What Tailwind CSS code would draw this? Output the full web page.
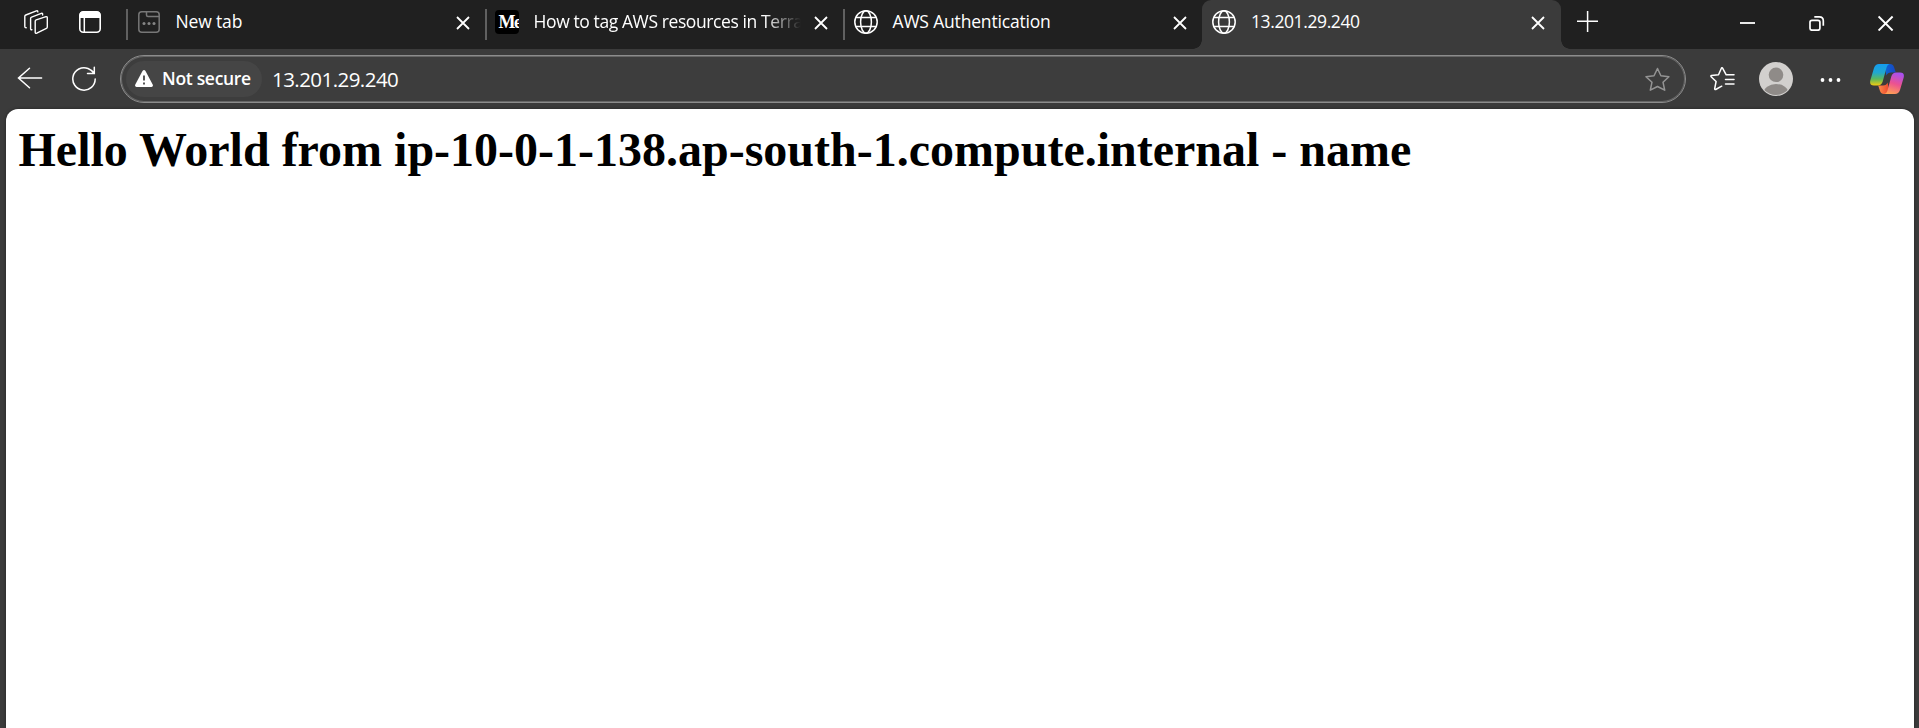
<!DOCTYPE html>
<html lang="en">
<head>
<meta charset="utf-8">
<title>13.201.29.240</title>
<script src="https://cdn.jsdelivr.net/npm/@tailwindcss/browser@4"></script>
</head>
<body class="h-screen overflow-hidden bg-[#3b3b3b] font-['Open_Sans','Noto_Sans',sans-serif] text-white">
<svg class="hidden">
  <symbol id="x" viewBox="0 0 14 14"><path d="M1 1l12 12M13 1L1 13" fill="none" stroke="#fff" stroke-width="1.8"/></symbol>
  <symbol id="globe" viewBox="0 0 24 24"><g fill="none" stroke="#fff" stroke-width="1.5"><circle cx="12" cy="12" r="11.2"/><ellipse cx="12" cy="12" rx="5.4" ry="11.2"/><path d="M1.8 7.5h20.4M1.8 16.5h20.4"/></g></symbol>
</svg>
<div class="flex h-screen flex-col">
  <div class="flex h-[49px] shrink-0 bg-[#202020]">
    <div class="flex w-[126px] shrink-0 items-start gap-[31px] pl-6 pt-[10px]">
      <svg class="h-6 w-6 shrink-0" viewBox="0 0 24 24" fill="none" stroke="#fff" stroke-width="1.4" stroke-linejoin="round" stroke-linecap="round">
        <path d="M12.2 9.8L22 6.7q1.3-.3 1.3 1V17q0 1-.9 1.4l-9.600 4.800q-1.600.5-1.600-1v-11q0-1 1-1.400z"/>
        <path d="M18.6 5V4.300q0-1.300-1.300-.900L7.600 7.100q-1 .4-1 1.400v10.300q0 1.200 1.300.9"/>
        <path d="M13.8 1.900q0-1.500-1.400-1L1.800 5q-1 .4-1 1.400v10.100q0 1.200 1.400 1.200"/>
      </svg>
      <svg class="mt-px h-[22px] w-[22px] shrink-0" viewBox="0 0 22 22"><rect x=".8" y=".8" width="20.400" height="20.400" rx="3.500" fill="none" stroke="#fff" stroke-width="1.600"/><path d="M.5 7V4Q.5.5 4 .5h14q3.500 0 3.500 3.500v3z" fill="#fff"/><path d="M5.300 6v15" stroke="#fff" stroke-width="1.500"/></svg>
    </div>
    <div class="flex w-[359px] shrink-0 items-start">
      <i class="mt-[9px] h-[31px] w-[1.500px] bg-[#606060]"></i>
      <svg class="ml-[10.500px] mt-[11px] h-[22px] w-[22px]" viewBox="0 0 22 22" fill="none" stroke="#777" stroke-width="1.500"><rect x=".8" y=".8" width="20.400" height="20.400" rx="3"/><path d="M8.500 1v3q0 1.500 1.500 1.500h11"/><g fill="#858585" stroke="none"><circle cx="6" cy="12.500" r="1.500"/><circle cx="11" cy="12.500" r="1.500"/><circle cx="16" cy="12.500" r="1.500"/></g></svg>
      <span class="ml-[15.500px] mt-[9px] w-[270px] whitespace-nowrap text-[17.500px] leading-6 tracking-[-0.150px]">New tab</span>
      <svg class="ml-[10px] mt-4 h-[14px] w-[14px]"><use href="#x"/></svg>
    </div>
    <div class="flex w-[358px] shrink-0 items-start">
      <i class="mt-[9px] h-[31px] w-[1.500px] bg-[#606060]"></i>
      <span class="ml-2 mt-[10px] flex h-6 w-6 shrink-0 overflow-hidden rounded bg-black pl-1 font-['Liberation_Serif',serif] text-[18px] font-bold leading-6 tracking-[-1.500px]">Me</span>
      <span class="ml-[15px] mt-[9px] w-[267px] overflow-hidden whitespace-nowrap text-[17.500px] leading-6 tracking-[-0.400px] [mask-image:linear-gradient(to_right,#000_230px,transparent_267px)]">How to tag AWS resources in Terraform</span>
      <svg class="ml-[13px] mt-4 h-[14px] w-[14px]"><use href="#x"/></svg>
    </div>
    <div class="flex w-[359px] shrink-0 items-start">
      <i class="mt-[9px] h-[31px] w-[1.500px] bg-[#606060]"></i>
      <svg class="ml-[9px] mt-[10px] h-6 w-6"><use href="#globe"/></svg>
      <span class="ml-[15px] mt-[9px] w-[270px] whitespace-nowrap text-[17.500px] leading-6 tracking-[-0.180px]">AWS Authentication</span>
      <svg class="ml-[10px] mt-4 h-[14px] w-[14px]"><use href="#x"/></svg>
    </div>
    <div class="relative flex w-[359px] shrink-0 items-start rounded-t-[9px] bg-[#3b3b3b]">
      <i class="absolute -left-[9px] bottom-0 h-[9px] w-[9px] bg-[radial-gradient(circle_at_0_0,transparent_8.500px,#3b3b3b_9px)]"></i>
      <i class="absolute -right-[9px] bottom-0 h-[9px] w-[9px] bg-[radial-gradient(circle_at_100%_0,transparent_8.500px,#3b3b3b_9px)]"></i>
      <svg class="ml-[10px] mt-[10px] h-6 w-6"><use href="#globe"/></svg>
      <span class="ml-[15px] mt-[9px] w-[270px] whitespace-nowrap text-[17.500px] leading-6 tracking-[-0.400px]">13.201.29.240</span>
      <svg class="ml-[10px] mt-4 h-[14px] w-[14px]"><use href="#x"/></svg>
    </div>
    <svg class="ml-4 mt-[10px] h-[22px] w-[22px] shrink-0" viewBox="0 0 22 22" stroke="#fff" stroke-width="1.500"><path d="M0 11.300h21M10.600 1v21"/></svg>
    <div class="ml-[141px] mt-[15px] flex items-start gap-[53px]">
      <svg class="h-4 w-4 shrink-0" viewBox="0 0 16 16"><path d="M0 8h15" stroke="#fff" stroke-width="1.800"/></svg>
      <svg class="h-4 w-4 shrink-0" viewBox="0 0 16 16" fill="none" stroke="#fff" stroke-width="1.700"><rect x="1" y="5.300" width="9.900" height="9.900" rx="2"/><path d="M5.300 1.800h5q4 0 4 4v5"/></svg>
      <svg class="h-4 w-4 shrink-0" viewBox="0 0 16 16"><path d="M.6 1.500l14 14M14.600 1.500l-14 14" stroke="#fff" stroke-width="1.900"/></svg>
    </div>
  </div>
  <div class="flex h-[60px] shrink-0 items-start">
    <svg class="ml-[17px] mt-[18px] h-[22px] w-[26px] shrink-0" viewBox="0 0 26 22" fill="none" stroke="#fff" stroke-width="1.500" stroke-linecap="round"><path d="M12.500 1.300L1.500 11l11 9.700M1.700 11H24.600"/></svg>
    <svg class="ml-[29px] mt-[17px] h-[26px] w-6 shrink-0" viewBox="0 0 24 26" fill="none" stroke="#fff" stroke-width="1.500" stroke-linecap="round"><path d="M16 2.500A11.200 11.200 0 1 0 23.200 13M22.300 1.300v6.200h-6.800M22 7.300Q19.600 3.900 16 2.500"/></svg>
    <div class="ml-6 mt-[6px] flex h-[48px] w-[1566px] shrink-0 items-start rounded-full border border-[#8c8c8c] bg-[#3d3d3d] shadow-[inset_0_0_0_1px_#666]">
      <div class="ml-[5px] mt-[5px] flex h-9 w-[136px] shrink-0 rounded-full bg-[#454545]">
        <svg class="ml-[9px] mt-[9px] h-[18px] w-[18px] shrink-0" viewBox="0 0 18 18"><path d="M7.500.9Q9-.8 10.500.9L17.800 14.800Q18.200 16.800 16.500 17H1.500Q-.2 16.800.2 14.800z" fill="#fff"/><path d="M9 5.500v5M9 12.500v2" stroke="#454545" stroke-width="1.800"/></svg>
        <span class="ml-[9px] mt-[5px] whitespace-nowrap text-[17.500px] font-semibold leading-6 tracking-[-0.300px]">Not secure</span>
      </div>
      <span class="ml-[10px] mt-[9px] grow whitespace-nowrap text-[20.500px] leading-7 tracking-[-0.550px]">13.201.29.240</span>
      <svg class="mr-[15px] mt-[11px] h-[25px] w-[25px]" viewBox="0 0 25 25" fill="none" stroke="#949494" stroke-width="1.500" stroke-linejoin="round"><path d="M12.500 1.500l3.400 7.300 8 .9-5.900 5.500 1.700 8-7.200-3.700-7.200 3.700 1.700-8L1 9.700l8-.9z"/></svg>
    </div>
    <svg class="ml-6 mt-[18px] h-[25px] w-[25px] shrink-0" viewBox="0 0 25 25" fill="none" stroke="#fff" stroke-width="1.500" stroke-linejoin="round" stroke-linecap="round"><path d="M24 7.800h-7.800L12.600 1.200q-.6-1-1.200 0L8.500 7.700l-7 .8q-1 .3-.4 1.200l5 4.800-1.400 7.200q0 1.200 1 .8l6-3.300M15.500 12.500H24M15.500 17H24"/></svg>
    <svg class="ml-6 mt-[13px] h-[34px] w-[34px] shrink-0" viewBox="0 0 34 34"><defs><clipPath id="av"><circle cx="17" cy="17" r="16"/></clipPath></defs><circle cx="17" cy="17" r="17" fill="#d2d0ce"/><g fill="#8f8b88" clip-path="url(#av)"><circle cx="17" cy="12.800" r="7.300"/><ellipse cx="17" cy="31" rx="12.500" ry="9"/></g></svg>
    <svg class="ml-[27px] mt-[29px] h-1 w-[21px] shrink-0" viewBox="0 0 21 4" fill="#fff"><circle cx="2.500" cy="2" r="1.900"/><circle cx="10.500" cy="2" r="1.900"/><circle cx="18.500" cy="2" r="1.900"/></svg>
    <svg class="ml-[29px] mt-[15px] h-[30px] w-[34px] shrink-0" viewBox="0 0 34 30">
      <defs>
        <linearGradient id="a" x1="0" y1="0" x2="0" y2="1"><stop offset="0" stop-color="#149cf0"/><stop offset=".4" stop-color="#20a8d0"/><stop offset=".7" stop-color="#5cb85c"/><stop offset="1" stop-color="#f4cc10"/></linearGradient>
        <linearGradient id="b" x1=".6" y1="0" x2=".3" y2="1"><stop offset="0" stop-color="#a850f0"/><stop offset=".5" stop-color="#ec5290"/><stop offset="1" stop-color="#ffa055"/></linearGradient>
        <linearGradient id="c"><stop offset="0" stop-color="#0c68d8"/><stop offset="1" stop-color="#1846c0"/></linearGradient>
        <linearGradient id="d"><stop offset="0" stop-color="#ff8c4a"/><stop offset="1" stop-color="#e8402c"/></linearGradient>
      </defs>
      <path d="M14 0h6q3 0 4 3l1.800 5.500H21q-3.500 0-4.500 3z" fill="url(#c)"/>
      <path d="M20 30h-6q-3 0-4-3L8.200 21.500H13q3.500 0 4.500-3z" fill="url(#d)"/>
      <path d="M9 0h10.500q-2 .5-2.800 3l-4 14.500q-1.200 4-5.200 4H4Q-.8 21.500.3 16.500L4 4Q5.400 0 9 0z" fill="url(#a)"/>
      <path d="M25 30H14.500q2-.5 2.800-3l4-14.500q1.200-4 5.200-4H30q4.800 0 3.700 5L30 26q-1.400 4-5 4z" fill="url(#b)"/>
    </svg>
  </div>
  <main class="ml-[6px] mr-[5px] grow rounded-t-[12px] bg-white pl-[12.500px] pt-[13px] text-black shadow-[0_0_3px_#222]">
    <h1 class="whitespace-nowrap font-['Liberation_Serif',serif] text-[48px] font-bold leading-[56px]">Hello World from ip-10-0-1-138.ap-south-1.compute.internal - name</h1>
  </main>
</div>
</body>
</html>
